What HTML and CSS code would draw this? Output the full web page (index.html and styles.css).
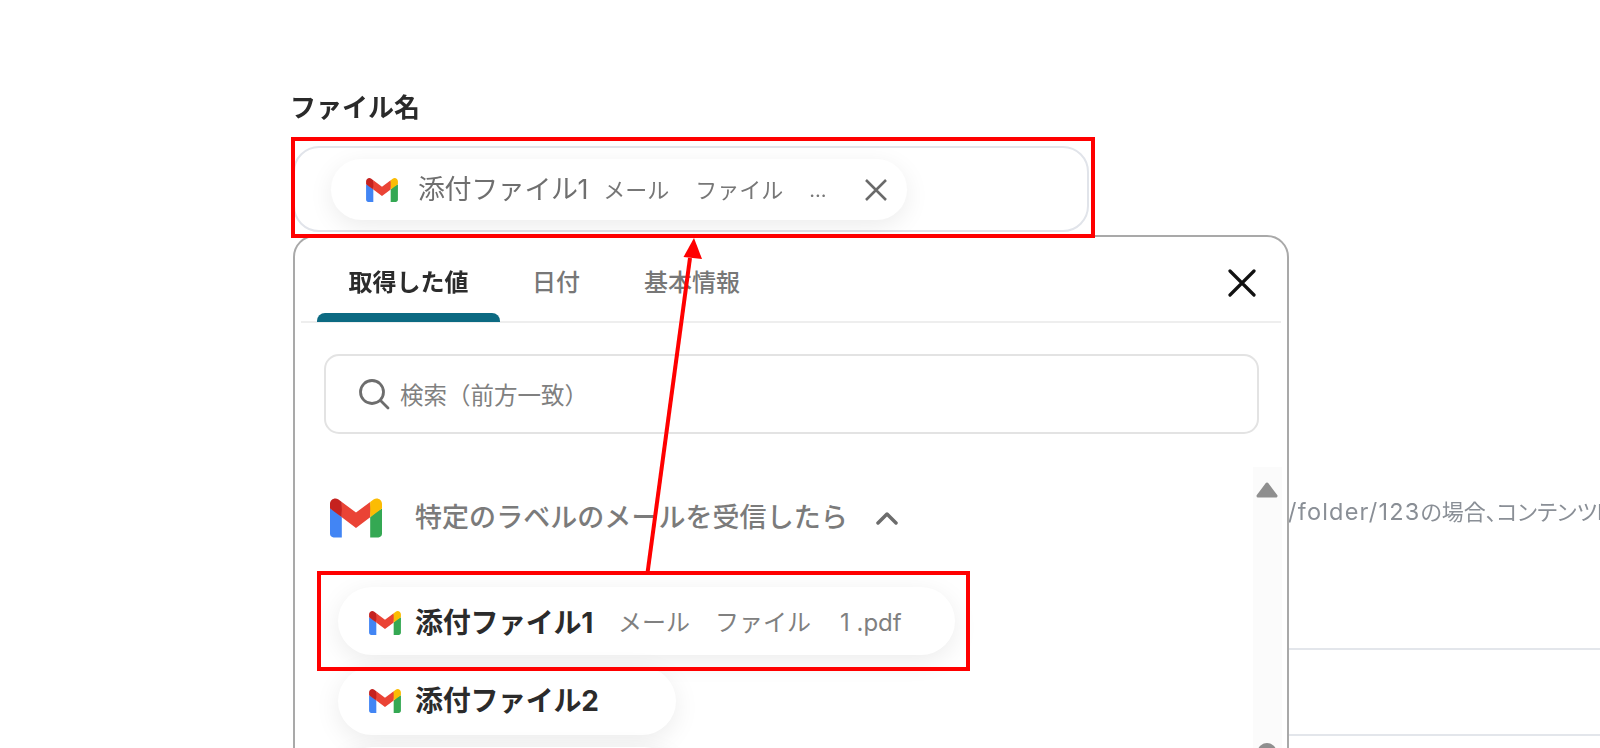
FILE: index.html
```html
<!DOCTYPE html>
<html lang="ja">
<head>
<meta charset="utf-8">
<title>ファイル名</title>
<link rel="stylesheet" href="styles.css">
</head>
<body>
<svg class="defs" width="0" height="0" aria-hidden="true">
  <symbol id="gmail" viewBox="0 0 256 193">
    <path fill="#4285f4" d="M58.18 192.05V93.14L27.5 65.08 0 49.5v125.09c0 9.66 7.83 17.46 17.45 17.46h40.73z"/>
    <path fill="#34a853" d="M197.82 192.05h40.73c9.65 0 17.45-7.83 17.45-17.45V49.5l-31.16 17.84-27.02 25.8v98.91z"/>
    <path fill="#ea4335" d="M58.18 93.14l-4.17-38.65 4.17-36.99L128 69.87l69.82-52.37 4.67 34.99-4.67 40.65L128 145.5z"/>
    <path fill="#fbbc04" d="M197.82 17.5V93.14L256 49.5V26.23c0-21.58-24.64-33.88-41.89-20.94l-16.29 12.21z"/>
    <path fill="#c5221f" d="M0 49.5l26.76 20.07L58.18 93.14V17.5L41.89 5.29C24.61-7.65 0 4.65 0 26.23V49.5z"/>
  </symbol>
</svg>
<main class="stage">
  <section class="field soft">
    <div class="field-label">ファイル名</div>
    <div class="input">
      <div class="chip">
        <svg class="icon-chip"><use href="#gmail"/></svg>
        <span class="chip-name">添付ファイル1</span>
        <span class="chip-meta">メール</span>
        <span class="chip-meta gap">ファイル</span>
        <span class="chip-meta gap dots">...</span>
        <svg class="chip-x" viewBox="0 0 24 24"><path d="M2 2 22 22M22 2 2 22"/></svg>
      </div>
    </div>
  </section>

  <section class="backdrop soft">
    <p class="hint"><span class="hint-path">/folder/123</span><span class="hint-text">の場合、コンテンツIDは123です</span></p>
    <div class="rule first"></div>
    <div class="rule second"></div>
  </section>

  <section class="popover soft">
    <header class="tabs">
      <div class="tab active">取得した値</div>
      <div class="tab">日付</div>
      <div class="tab">基本情報</div>
      <svg class="close" viewBox="0 0 28 28"><path d="M2 2 26 26M26 2 2 26"/></svg>
    </header>
    <div class="search">
      <svg class="search-icon" viewBox="0 0 32 32"><circle cx="14" cy="14" r="11.5"/><path d="M22.5 22.5 30 30"/></svg>
      <span>検索（前方一致）</span>
    </div>
    <div class="list">
      <div class="group">
        <svg class="icon-group"><use href="#gmail"/></svg>
        <span class="group-title">特定のラベルのメールを受信したら</span>
        <svg class="chevron" viewBox="0 0 22 14"><path d="M2 12 11 3l9 9"/></svg>
      </div>
      <div class="value lowered">
        <svg class="icon-row"><use href="#gmail"/></svg>
        <span class="value-name">添付ファイル1</span>
        <span class="value-meta lead">メール</span>
        <span class="value-meta">ファイル</span>
        <span class="value-meta wide">1 .pdf</span>
      </div>
      <div class="value solo">
        <svg class="icon-row"><use href="#gmail"/></svg>
        <span class="value-name">添付ファイル2</span>
      </div>
      <div class="value empty"></div>
    </div>
    <div class="scrollbar">
      <svg class="scroll-up" viewBox="0 0 22 16"><path d="M11 2 20 14H2z"/></svg>
      <span class="scroll-thumb"></span>
    </div>
  </section>

  <div class="mark mark-top"></div>
  <div class="mark mark-row"></div>
  <svg class="arrow" viewBox="0 0 1600 748">
    <path class="arrow-line" d="M647.500 573 690 258"/>
    <path class="arrow-head" d="M694 238 683.500 257 702 259z"/>
  </svg>
</main>
</body>
</html>
```

FILE: styles.css
```css
* { box-sizing: border-box; }
html, body { margin: 0; background: #fff; }
body { font-family: Inter, "Noto Sans CJK JP", sans-serif; color: #222; }
.defs { position: absolute; }
.soft { filter: blur(.45px); }

.stage {
  position: relative;
  width: 1600px;
  height: 748px;
  overflow: hidden;
  padding: 90px 0 0 293px;
}

.field { width: 796px; }
.field-label {
  font-size: 26px;
  font-weight: 700;
  line-height: 36px;
  color: #2a2a2a;
  margin-bottom: 20px;
  margin-left: -3px;
}
.input {
  height: 86px;
  border: 2px solid #e1e4ea;
  border-radius: 26px;
  padding: 11px 0 0 36px;
}
.chip {
  display: flex;
  align-items: center;
  width: 576px;
  height: 61px;
  padding: 0 19px 0 35px;
  border-radius: 31px;
  background: #fff;
  box-shadow: 0 6px 24px rgba(0, 0, 0, .08);
  color: #6f6f6f;
}
.icon-chip { width: 32px; height: 24px; flex: none; margin-right: 20px; }
.chip-name { font-size: 27px; line-height: 36px; letter-spacing: -.4px; }
.chip-meta { font-size: 22px; line-height: 32px; margin-left: 15px; color: #777; }
.chip-meta.gap { margin-left: 26px; }
.chip-meta.dots { font-size: 20px; }
.chip-x { width: 24px; height: 24px; margin-left: auto; flex: none; fill: none; stroke: #6a6a6a; stroke-width: 2.500; }

.backdrop { position: relative; margin-left: 995px; padding-top: 266px; white-space: nowrap; }
.hint { margin: 0; padding-bottom: 122px; font-size: 22px; line-height: 28px; color: #8a8f96; }
.hint-path { font-size: 23.500px; letter-spacing: 1.200px; }
.hint-text { font-feature-settings: "palt"; }
.rule { height: 2px; background: #e3e6eb; margin-right: -320px; }
.rule.second { margin-top: 84px; }

.popover {
  position: absolute;
  left: 293px;
  top: 235px;
  width: 996px;
  height: 600px;
  padding: 0 6px;
  background: #fff;
  border: 2px solid #a9a9a9;
  border-radius: 22px;
}
.tabs {
  display: flex;
  align-items: center;
  height: 86px;
  padding-left: 16px;
  border-bottom: 2px solid #eeeeee;
}
.tab {
  height: 100%;
  padding: 28px 32px 0;
  font-size: 24px;
  line-height: 36px;
  font-weight: 500;
  color: #777;
}
.tab:nth-child(2) { padding-left: 32px; }
.tab.active {
  position: relative;
  width: 183px;
  padding: 28px 0 0;
  text-align: center;
  font-weight: 700;
  color: #2c2c2c;
}
.tab.active::after {
  content: "";
  position: absolute;
  left: 0;
  right: 0;
  bottom: -1px;
  height: 9px;
  background: #0c6a82;
  border-radius: 8px 8px 0 0;
}
.close { width: 28px; height: 28px; margin: 8px 25px 0 auto; fill: none; stroke: #111; stroke-width: 3.200; stroke-linecap: round; }

.search {
  display: flex;
  align-items: center;
  height: 80px;
  margin: 31px 22px 0 23px;
  padding-left: 32px;
  border: 2px solid #e3e3e3;
  border-radius: 15px;
  color: #808080;
  font-size: 23.500px;
}
.search-icon { width: 32px; height: 32px; margin-right: 10px; fill: none; stroke: #6d6d6d; stroke-width: 2.800; stroke-linecap: round; }

.list { padding: 64px 0 0 29px; }
.group { display: flex; align-items: center; height: 40px; margin-bottom: 49px; }
.icon-group { width: 52px; height: 40px; flex: none; margin-right: 33px; }
.group-title { font-size: 27px; font-weight: 500; line-height: 40px; letter-spacing: .05px; color: #7b7b7b; }
.chevron { width: 22px; height: 14px; margin-left: 28px; fill: none; stroke: #6c6c6c; stroke-width: 3.500; stroke-linecap: round; stroke-linejoin: round; }

.value {
  display: flex;
  align-items: center;
  width: max-content;
  height: 68px;
  margin: 0 0 12px 8px;
  padding: 0 53px 0 31px;
  border-radius: 34px;
  background: #fff;
  box-shadow: 0 6px 26px rgba(0, 0, 0, .08);
}
.value.lowered { padding-top: 3px; }
.value.solo { padding-right: 77px; }
.value.empty { width: 340px; }
.icon-row { width: 32px; height: 24px; flex: none; margin-right: 14px; }
.value-name { font-size: 28px; font-weight: 700; line-height: 36px; letter-spacing: -.3px; color: #2b2b2b; }
.value-meta { margin-left: 25px; font-size: 24px; line-height: 34px; color: #808080; }
.value-meta.lead { margin-left: 25px; }
.value-meta.wide { margin-left: 29px; }

.scrollbar {
  position: absolute;
  right: 5px;
  top: 230px;
  bottom: 0;
  width: 29px;
  background: #fbfbfb;
}
.scroll-up {
  position: absolute;
  left: 3px;
  top: 15px;
  width: 22px;
  height: 16px;
  fill: #8f8f8f;
  stroke: #8f8f8f;
  stroke-width: 3;
  stroke-linejoin: round;
}
.scroll-thumb {
  position: absolute;
  left: 4px;
  top: 276px;
  width: 20px;
  height: 60px;
  border-radius: 10px;
  background: #8f8f8f;
}

.mark { position: absolute; border: 4px solid #f00; }
.mark-top { left: 291px; top: 137px; width: 804px; height: 101px; }
.mark-row { left: 317px; top: 571px; width: 653px; height: 100px; }
.arrow { position: absolute; left: 0; top: 0; width: 1600px; height: 748px; }
.arrow-line { fill: none; stroke: #f00; stroke-width: 4; }
.arrow-head { fill: #f00; }
```
